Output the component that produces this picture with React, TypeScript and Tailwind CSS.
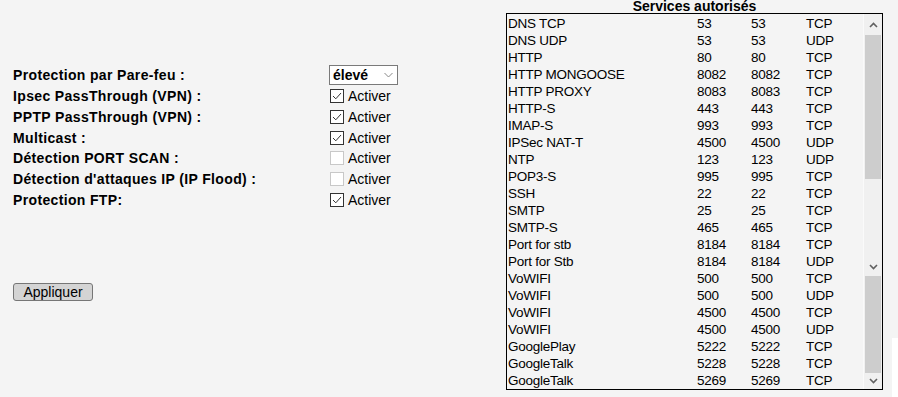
import React from "react";

const rows: [string, string, string, string][] = [
  ["DNS TCP", "53", "53", "TCP"],
  ["DNS UDP", "53", "53", "UDP"],
  ["HTTP", "80", "80", "TCP"],
  ["HTTP MONGOOSE", "8082", "8082", "TCP"],
  ["HTTP PROXY", "8083", "8083", "TCP"],
  ["HTTP-S", "443", "443", "TCP"],
  ["IMAP-S", "993", "993", "TCP"],
  ["IPSec NAT-T", "4500", "4500", "UDP"],
  ["NTP", "123", "123", "UDP"],
  ["POP3-S", "995", "995", "TCP"],
  ["SSH", "22", "22", "TCP"],
  ["SMTP", "25", "25", "TCP"],
  ["SMTP-S", "465", "465", "TCP"],
  ["Port for stb", "8184", "8184", "TCP"],
  ["Port for Stb", "8184", "8184", "UDP"],
  ["VoWIFI", "500", "500", "TCP"],
  ["VoWIFI", "500", "500", "UDP"],
  ["VoWIFI", "4500", "4500", "TCP"],
  ["VoWIFI", "4500", "4500", "UDP"],
  ["GooglePlay", "5222", "5222", "TCP"],
  ["GoogleTalk", "5228", "5228", "TCP"],
  ["GoogleTalk", "5269", "5269", "TCP"],
];

const opts: [string, boolean][] = [
  ["Ipsec PassThrough (VPN) :", true],
  ["PPTP PassThrough (VPN) :", true],
  ["Multicast :", true],
  ["Détection PORT SCAN :", false],
  ["Détection d'attaques IP (IP Flood) :", false],
  ["Protection FTP:", true],
];

const LS = { fontFamily: "'Liberation Sans', Arial, sans-serif" };

function Box({ checked }: { checked: boolean }) {
  return checked ? (
    <span className="w-[14px] h-[14px] border border-[#333] bg-white flex items-center justify-center">
      <svg width="12" height="12" viewBox="0 0 12 12">
        <path d="M2 6 L4.8 8.8 L10 3" fill="none" stroke="#333" strokeWidth="1" />
      </svg>
    </span>
  ) : (
    <span className="w-[14px] h-[14px] border border-[#c8c8c8] bg-white" />
  );
}

function Chev({ up }: { up?: boolean }) {
  return (
    <svg width="9" height="6" viewBox="0 0 9 6">
      <path d={up ? "M1 5 L4.5 1.5 L8 5" : "M1 1 L4.5 4.5 L8 1"} fill="none" stroke="#606060" strokeWidth="1.6" />
    </svg>
  );
}

export default function App() {
  return (
    <div className="relative w-[898px] h-[397px] overflow-hidden bg-[#f4f4f4] text-black flex" style={LS}>
      <div className="w-[506px] flex flex-col pl-[13px] pt-[65px]">
        <div className="flex items-center h-[20px]">
          <span className="w-[316px] font-bold text-[14px] tracking-[0.35px] leading-none">
            Protection par Pare-feu :
          </span>
          <div className="w-[69px] h-[20px] border border-[#7a7a7a] bg-white flex items-center pl-[3px] pr-[4px] justify-between">
            <span className="font-bold text-[14px] leading-none">élevé</span>
            <svg width="9" height="6" viewBox="0 0 9 6">
              <path d="M0.5 1 L4.5 5 L8.5 1" fill="none" stroke="#888" strokeWidth="1" />
            </svg>
          </div>
        </div>
        <div className="flex flex-col pt-[1px]">
          {opts.map(([l, c], i) => (
            <div key={i} className="flex items-center h-[20.7px]">
              <span className="w-[317px] font-bold text-[14px] tracking-[0.35px] leading-none">{l}</span>
              <Box checked={c} />
              <span className="ml-[4px] text-[14px] leading-none">Activer</span>
            </div>
          ))}
        </div>
        <div className="mt-[73px]">
          <button className="w-[80px] h-[18px] rounded-[3px] border border-[#767676] bg-[#d4d4d4] text-[14px] leading-none flex items-center justify-center">
            Appliquer
          </button>
        </div>
      </div>
      <div className="w-[377px] flex flex-col">
        <div className="h-[13px] flex items-end justify-center font-bold text-[14px] leading-[16px]">
          <span className="-mb-[1px]">Services autorisés</span>
        </div>
        <div className="w-[377px] h-[377px] border border-black flex bg-[#f4f4f4]">
          <div className="flex-1 flex flex-col pl-[1px] pt-[1px] text-[13.5px] tracking-[-0.25px]">
            {rows.map((r, i) => (
              <div key={i} className="flex h-[17px] items-center leading-none">
                <span className="w-[189px]">{r[0]}</span>
                <span className="w-[54px]">{r[1]}</span>
                <span className="w-[55px]">{r[2]}</span>
                <span>{r[3]}</span>
              </div>
            ))}
          </div>
          <div className="w-[19px] flex flex-col bg-[#f0f0f0] border-l border-[#fafafa]">
            <div className="h-[21px] flex items-center justify-center"><Chev up /></div>
            <div className="h-[144px] bg-[#cdcdcd] mx-[1px]" />
            <div className="h-[79px]" />
            <div className="h-[18px] flex items-center justify-center"><Chev /></div>
            <div className="h-[97px] bg-[#cdcdcd] mx-[1px]" />
            <div className="flex-1 flex items-center justify-center"><Chev /></div>
          </div>
        </div>
      </div>
      <div className="absolute left-[892px] top-[338px] w-[6px] h-[59px] bg-white" />
    </div>
  );
}
